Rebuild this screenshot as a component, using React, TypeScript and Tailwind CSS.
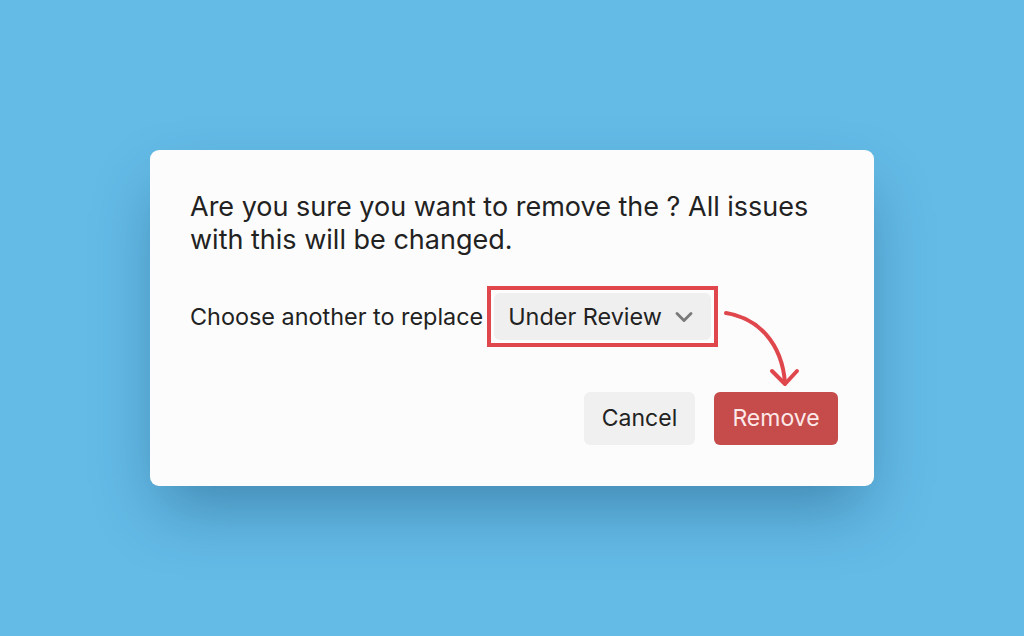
import React from 'react';
import { ChevronDown } from 'lucide-react';

const App: React.FC = () => {
  return (
    <div className="flex h-[636px] w-[1024px] items-center justify-center bg-[#63bbe6] font-['Inter',sans-serif]">
      <div className="relative flex h-[336px] w-[724px] flex-col rounded-[9px] bg-[#fcfcfc] pb-[41px] pl-[40px] pr-[36px] pt-[40px] shadow-[0_30px_60px_-10px_rgba(0,40,80,0.35)]">
        <p className="w-[640px] text-[27px] leading-[33px] text-[#222]">
          Are you sure you want to remove the ? All issues with this will be changed.
        </p>

        <div className="mt-[30px] flex items-center">
          <span className="text-[23.4px] text-[#222]">Choose another to replace</span>
          <div className="ml-[4px] border-4 border-[#e0474c] p-[3px]">
            <button className="flex h-[47px] w-[217px] items-center rounded-md bg-[#efefef] pl-[14px] text-[23.4px] text-[#222]">
              Under Review
              <ChevronDown size={28} strokeWidth={2.5} className="ml-[8px] text-[#7a7a7a]" />
            </button>
          </div>
        </div>

        <div className="mt-auto flex justify-end gap-[19px]">
          <button className="h-[53px] w-[111px] rounded-md bg-[#f0f0f0] text-[23px] text-[#222]">Cancel</button>
          <button className="h-[53px] w-[124px] rounded-md bg-[#c64b4b] text-[23px] text-[#fde8e8]">Remove</button>
        </div>

        <svg
          className="absolute left-[570px] top-[158px]"
          width="84"
          height="84"
          viewBox="0 0 84 84"
          fill="none"
          stroke="#e0474c"
          strokeWidth="4"
          strokeLinecap="round"
          strokeLinejoin="round"
        >
          <path d="M6 5 C 38 10, 62 35, 65 75" />
          <path d="M52 63 L65 76 L77 63" />
        </svg>
      </div>
    </div>
  );
};

export default App;
